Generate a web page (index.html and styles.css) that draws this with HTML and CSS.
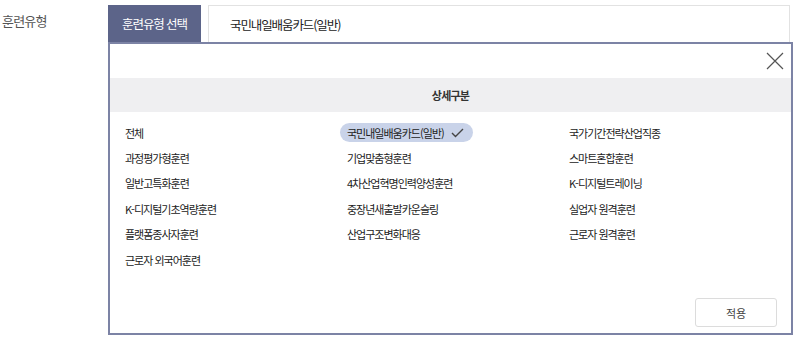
FILE: index.html
```html
<!DOCTYPE html>
<html lang="ko">
<head>
    <meta charset="UTF-8">
    <meta name="viewport" content="width=device-width, initial-scale=1.0">
    <title>훈련유형</title>
    <link rel="stylesheet" href="styles.css">
</head>
<body>
    <div class="row">
        <div class="label">훈련유형</div>
        <div class="field">
            <div class="top">
                <div class="tab">훈련유형 선택</div>
                <div class="value">국민내일배움카드(일반)</div>
            </div>
            <div class="panel">
                <div class="close-row">
                    <button class="close" aria-label="닫기">
                        <svg width="18" height="18" viewBox="0 0 18 18">
                            <path d="M1 1 L17 17 M17 1 L1 17" stroke="#555" stroke-width="1.2" fill="none"/>
                        </svg>
                    </button>
                </div>
                <div class="head">상세구분</div>
                <ul class="items">
                    <li>전체</li>
                    <li><span class="pill">국민내일배움카드(일반)
                        <svg width="13" height="10" viewBox="0 0 13 10"><path d="M1 5 L4.5 8.5 L12 1" stroke="#444" stroke-width="1.4" fill="none"/></svg>
                    </span></li>
                    <li>국가기간전략산업직종</li>
                    <li>과정평가형훈련</li>
                    <li>기업맞춤형훈련</li>
                    <li>스마트혼합훈련</li>
                    <li>일반고특화훈련</li>
                    <li>4차산업혁명인력양성훈련</li>
                    <li>K-디지털트레이닝</li>
                    <li>K-디지털기초역량훈련</li>
                    <li>중장년새출발카운슬링</li>
                    <li>실업자 원격훈련</li>
                    <li>플랫폼종사자훈련</li>
                    <li>산업구조변화대응</li>
                    <li>근로자 원격훈련</li>
                    <li>근로자 외국어훈련</li>
                </ul>
                <div class="actions">
                    <button class="apply">적용</button>
                </div>
            </div>
        </div>
    </div>
</body>
</html>
```

FILE: styles.css
```css
body {
    margin: 0;
    font-family: "Noto Sans CJK KR", "Noto Sans", sans-serif;
    color: #333;
    background: #fff;
}
.row {
    display: flex;
    padding-top: 5px;
}
.label {
    width: 108px;
    font-size: 13px;
    letter-spacing: -0.8px;
    color: #555;
    padding-top: 6px;
    padding-left: 2px;
    box-sizing: border-box;
}
.field {
    width: 685px;
}
.top {
    display: flex;
    height: 37px;
}
.tab {
    width: 93px;
    background-color: #5c6489;
    color: #fff;
    font-size: 12.5px;
    letter-spacing: -1.1px;
    display: flex;
    align-items: center;
    justify-content: center;
}
.value {
    flex: 1;
    margin-left: 7px;
    margin-right: 3px;
    border: 1px solid #e2e2e2;
    border-bottom: none;
    font-size: 12.5px;
    letter-spacing: -1.1px;
    color: #222;
    display: flex;
    align-items: center;
    padding-left: 21px;
}
.panel {
    border: 2px solid #7c83a5;
    height: 293px;
    box-sizing: border-box;
    display: flex;
    flex-direction: column;
}
.close-row {
    height: 34px;
    display: flex;
    justify-content: flex-end;
    align-items: center;
    padding-right: 7px;
}
.close {
    background: none;
    border: none;
    padding: 0;
    width: 18px;
    height: 18px;
    cursor: pointer;
}
.head {
    height: 34px;
    background-color: #efeff1;
    font-size: 11px;
    font-weight: bold;
    letter-spacing: -0.8px;
    color: #333;
    display: flex;
    align-items: center;
    justify-content: center;
}
.items {
    list-style: none;
    margin: 0;
    padding: 8px 0 0 15px;
    display: grid;
    grid-template-columns: repeat(3, 1fr);
    grid-auto-rows: 25.4px;
    font-size: 11px;
    letter-spacing: -1px;
    color: #222;
}
.items li {
    display: flex;
    align-items: center;
}
.pill {
    display: inline-flex;
    align-items: center;
    gap: 7px;
    background-color: #c9d3e9;
    border-radius: 10px;
    height: 19px;
    padding: 0 9px 0 7px;
    margin-left: -7px;
}
.actions {
    margin-top: auto;
    display: flex;
    justify-content: flex-end;
    padding: 0 14px 6px 0;
}
.apply {
    width: 82px;
    height: 29px;
    background: #fff;
    border: 1px solid #dcdcdc;
    border-radius: 3px;
    font-family: inherit;
    font-size: 11px;
    color: #444;
}
```
